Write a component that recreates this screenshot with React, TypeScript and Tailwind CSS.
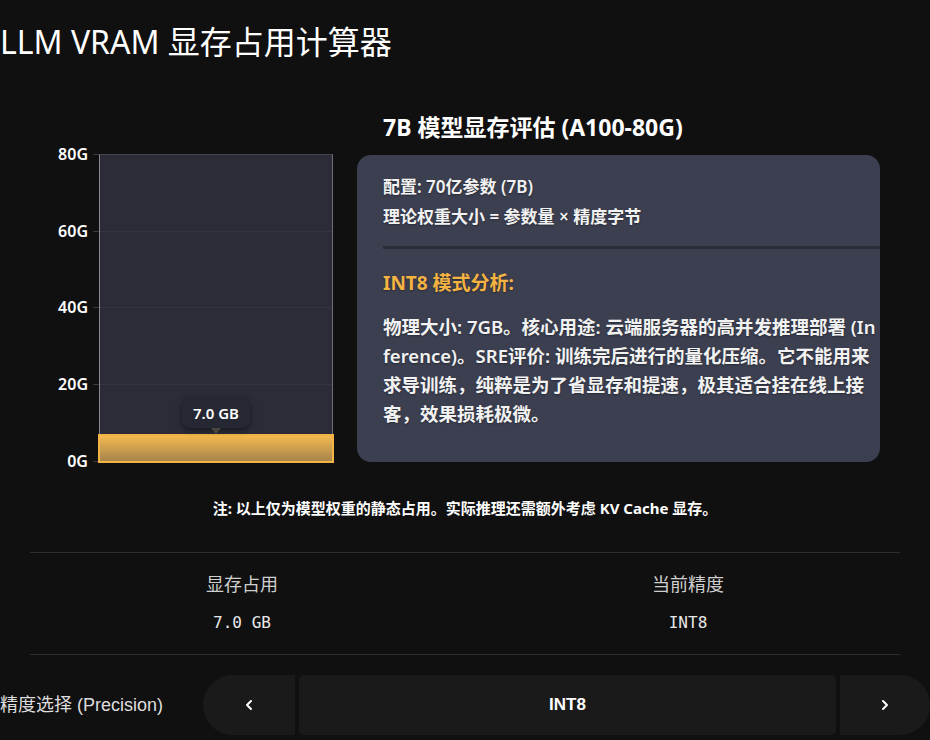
import { ChevronLeft, ChevronRight } from 'lucide-react';

const ticks = [
  { label: '80G', top: 'top-[32px]', line: 'top-[41px]' },
  { label: '60G', top: 'top-[109px]', line: 'top-[118px]' },
  { label: '40G', top: 'top-[185px]', line: 'top-[194px]' },
  { label: '20G', top: 'top-[262px]', line: 'top-[271px]' },
  { label: '0G', top: 'top-[339px]', line: 'top-[348px]' },
];

function VramChart() {
  return (
    <div className="relative w-[357px] h-[349px] shrink-0">
      {/* plot area */}
      <div className="absolute left-[99px] top-[41px] w-[234px] h-[307px] bg-[#2c2c38] border-t border-[#45454f] border-l border-l-[#85858d] border-r border-r-[#6e6e78]" />
      {ticks.map((t) => (
        <div key={t.label}>
          <div className={`absolute left-0 w-[88px] text-right text-[16px] leading-[18px] font-semibold text-white ${t.top}`}>
            {t.label}
          </div>
          <div className={`absolute left-[93px] w-[6px] h-px bg-[#3a3a44] ${t.line}`} />
          {t.label !== '80G' && t.label !== '0G' && (
            <div className={`absolute left-[100px] w-[232px] h-px bg-[#353542] ${t.line}`} />
          )}
        </div>
      ))}

      {/* bar */}
      <div className="absolute left-[98px] top-[321px] w-[236px] h-[29px] border-2 border-[#f2b447] bg-gradient-to-b from-[#f4b84d] to-[#a8854b]" />

      {/* tooltip */}
      <div className="absolute left-[182px] top-[285px] w-[68px] h-[30px] rounded-lg bg-[#252733] shadow-[0_2px_6px_rgba(0,0,0,0.5)] flex items-center justify-center text-[15px] font-semibold text-white">
        7.0 GB
      </div>
      <div className="absolute left-[211px] top-[315px] w-0 h-0 border-x-[5px] border-x-transparent border-t-[6px] border-t-[#4a463f]" />
    </div>
  );
}

function AnalysisPanel() {
  return (
    <div className="w-[523px] shrink-0">
      <h2 className="pl-[26px] text-[23px] leading-[28px] font-bold text-white mb-[14px]">
        7B 模型显存评估 (A100-80G)
      </h2>
      <div className="h-[307px] rounded-[14px] bg-[#3b3f50] pl-[26px] pt-[17px] text-[#f2f2f2] [text-shadow:0_1px_2px_rgba(0,0,0,0.35)]">
        <p className="text-[17px] leading-[30px] font-semibold">配置: 70亿参数 (7B)</p>
        <p className="text-[17px] leading-[30px] font-semibold">理论权重大小 = 参数量 × 精度字节</p>
        <div className="mt-[14px] h-[3px] bg-[#2b2d38]" />
        <h3 className="mt-[20px] text-[19px] leading-[28px] font-bold text-[#f5b342]">INT8 模式分析:</h3>
        <p className="mt-[15px] pr-[3px] text-[18.5px] leading-[29px] font-semibold break-all">
          物理大小: 7GB。核心用途: 云端服务器的高并发推理部署 (Inference)。SRE评价: 训练完后进行的量化压缩。它不能用来求导训练，纯粹是为了省显存和提速，极其适合挂在线上接客，效果损耗极微。
        </p>
      </div>
    </div>
  );
}

export default function App() {
  return (
    <div className="min-h-[740px] w-[930px] overflow-hidden bg-[#101010] text-white font-[Noto_Sans,Noto_Sans_CJK_SC,sans-serif]">
      <h1 className="pt-[18px] text-[32px] leading-[48px] font-normal text-white">
        LLM VRAM 显存占用计算器
      </h1>

      <section className="mt-[47px] flex">
        <VramChart />
        <AnalysisPanel />
      </section>

      <p className="mt-[35px] text-center text-[15px] leading-[22px] font-bold text-white">
        注: 以上仅为模型权重的静态占用。实际推理还需额外考虑 KV Cache 显存。
      </p>

      <div className="mx-[30px] mt-[33px] border-y border-[#2e2e2e] grid grid-cols-2 gap-[22px] pt-[20px] pb-[21px]">
        <div className="flex flex-col items-center">
          <span className="text-[18px] leading-[24px] text-[#cfcfcf] font-[Liberation_Sans,Noto_Sans_CJK_SC,sans-serif]">显存占用</span>
          <span className="mt-[16px] text-[16px] leading-[20px] text-[#e8e8e8] font-[DejaVu_Sans_Mono,monospace]">7.0 GB</span>
        </div>
        <div className="flex flex-col items-center">
          <span className="text-[18px] leading-[24px] text-[#cfcfcf] font-[Liberation_Sans,Noto_Sans_CJK_SC,sans-serif]">当前精度</span>
          <span className="mt-[16px] text-[16px] leading-[20px] text-[#e8e8e8] font-[DejaVu_Sans_Mono,monospace]">INT8</span>
        </div>
      </div>

      <div className="mt-[20px] flex items-center">
        <span className="w-[203px] shrink-0 text-[18px] text-[#dedede] font-[Liberation_Sans,Noto_Sans_CJK_SC,sans-serif]">
          精度选择 (Precision)
        </span>
        <div className="flex gap-[4px] h-[60px]">
          <button className="w-[92px] rounded-l-full rounded-r-[4px] bg-[#1a1a1a] flex items-center justify-center text-white">
            <ChevronLeft className="w-4 h-4" strokeWidth={3} />
          </button>
          <button className="w-[537px] rounded-[5px] bg-[#1a1a1a] text-[17px] font-bold text-white font-[Liberation_Sans,sans-serif]">
            INT8
          </button>
          <button className="w-[90px] rounded-r-full rounded-l-[4px] bg-[#1a1a1a] flex items-center justify-center text-white">
            <ChevronRight className="w-4 h-4" strokeWidth={3} />
          </button>
        </div>
      </div>
    </div>
  );
}
